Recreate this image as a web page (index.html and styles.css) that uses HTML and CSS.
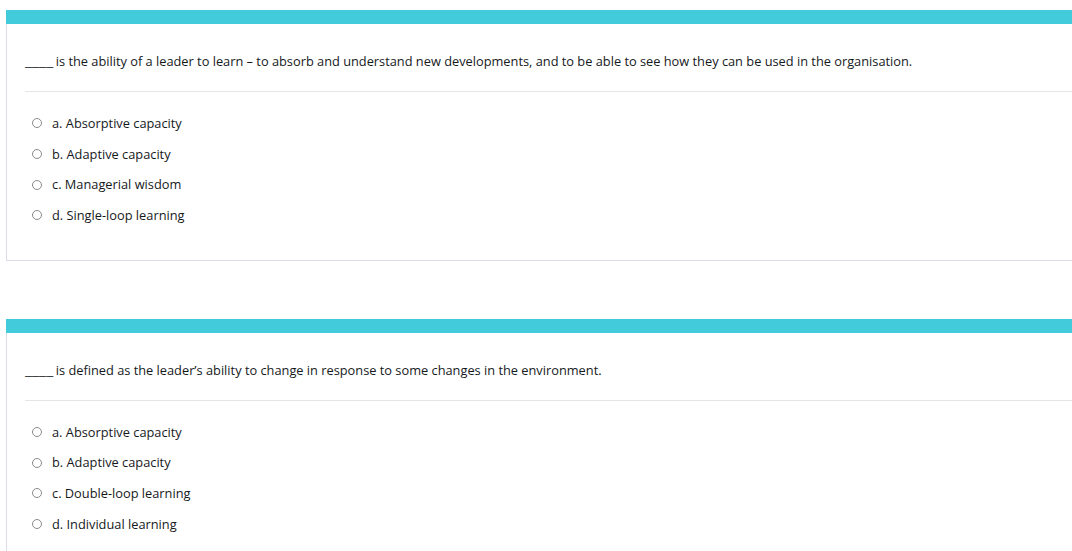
FILE: index.html
```html
<!DOCTYPE html>
<html lang="en">
<head>
<meta charset="utf-8">
<title>Quiz</title>
<link rel="stylesheet" href="styles.css">
</head>
<body>
<div class="page">
  <section class="card">
    <div class="card-bar"></div>
    <div class="card-body">
      <p class="qtext"><span class="blank">____</span> is the ability of a leader to learn – to absorb and understand new developments, and to be able to see how they can be used in the organisation.</p>
      <ul class="answers">
        <li class="answer"><span class="radio"></span><span class="label">a. Absorptive capacity</span></li>
        <li class="answer"><span class="radio"></span><span class="label">b. Adaptive capacity</span></li>
        <li class="answer"><span class="radio"></span><span class="label">c. Managerial wisdom</span></li>
        <li class="answer"><span class="radio"></span><span class="label">d. Single-loop learning</span></li>
      </ul>
    </div>
  </section>
  <section class="card">
    <div class="card-bar"></div>
    <div class="card-body">
      <p class="qtext"><span class="blank">____</span> is defined as the leader’s ability to change in response to some changes in the environment.</p>
      <ul class="answers">
        <li class="answer"><span class="radio"></span><span class="label">a. Absorptive capacity</span></li>
        <li class="answer"><span class="radio"></span><span class="label">b. Adaptive capacity</span></li>
        <li class="answer"><span class="radio"></span><span class="label">c. Double-loop learning</span></li>
        <li class="answer"><span class="radio"></span><span class="label">d. Individual learning</span></li>
      </ul>
    </div>
  </section>
</div>
</body>
</html>
```
FILE: styles.css
```css
html, body {
  margin: 0;
  padding: 0;
  background: #ffffff;
  overflow: hidden;
}
body {
  font-family: "Open Sans", "Noto Sans", sans-serif;
  font-size: 12.8px;
  color: #16191c;
}
.page {
  padding-top: 10px;
  padding-left: 6px;
  display: flex;
  flex-direction: column;
  gap: 58px;
}
.card {
  width: 1100px;
  border-left: 1px solid #dcdde4;
  border-bottom: 1px solid #dcdde4;
}
.card-bar {
  height: 14px;
  margin-left: -1px;
  background: #41cbdb;
}
.card-body {
  padding: 0 0 0 18px;
}
.qtext {
  margin: 0;
  padding: 29px 0 21px 0;
  line-height: 17px;
  border-bottom: 1px solid #e6e6e6;
}
.blank {
  display: inline-block;
  transform: scaleX(1.26);
  transform-origin: left center;
  margin-right: 5px;
}
.answers {
  list-style: none;
  margin: 0;
  padding: 16px 0 29px 0;
}
.answer {
  display: flex;
  align-items: center;
  height: 30.7px;
}
.radio {
  box-sizing: border-box;
  width: 10px;
  height: 10px;
  border: 1px solid #8a8a8a;
  border-radius: 50%;
  margin-left: 7px;
  margin-right: 10px;
}
.label {
  line-height: 17px;
}
```
